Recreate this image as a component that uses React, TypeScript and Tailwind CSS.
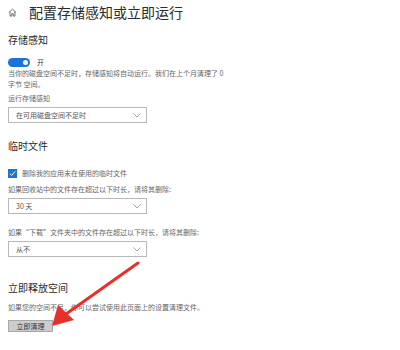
import React from "react";

const font = { fontFamily: '"Noto Sans CJK SC", "Noto Sans", sans-serif' };

function Chevron() {
  return (
    <svg width="8" height="5" viewBox="0 0 8 5" className="mr-[5px]">
      <path d="M0.5 0.5 L4 4 L7.5 0.5" fill="none" stroke="#9a9a9a" strokeWidth="0.9" />
    </svg>
  );
}

function Dropdown({ label }: { label: string }) {
  return (
    <div className="mt-[3px] flex h-[16px] w-[139px] items-center justify-between border border-[#b8b8b8] bg-white pl-[7px] text-[7px] leading-none text-[#555]">
      <span>{label}</span>
      <Chevron />
    </div>
  );
}

export default function App() {
  return (
    <div className="relative h-[350px] w-[400px] overflow-hidden bg-white" style={font}>
      <div className="flex flex-col pl-[8px]">
        <div className="flex h-[24px] items-center">
          <svg width="9" height="9" viewBox="0 0 10 10" className="mr-[12px] mt-[1px]">
            <path d="M1 5 L5 1.2 L9 5 M2.3 4 V9 H4.2 V6.3 H5.8 V9 H7.7 V4" fill="none" stroke="#555" strokeWidth="0.9" strokeLinejoin="round" />
          </svg>
          <span className="text-[14px] leading-[24px] text-[#2b2b2b]">配置存储感知或立即运行</span>
        </div>

        <div className="mt-[9px] text-[10px] leading-[14px] text-[#2b2b2b]">存储感知</div>

        <div className="mt-[11px] flex h-[9px] items-center">
          <div className="flex h-[9px] w-[22px] items-center justify-end rounded-full bg-[#1a73d9] pr-[2px]">
            <div className="h-[5px] w-[5px] rounded-full bg-white" />
          </div>
          <span className="ml-[7px] text-[7px] leading-none text-[#444]">开</span>
        </div>

        <div className="mt-[1px] w-[270px] text-[7px] leading-[11px] text-[#666]">
          当你的磁盘空间不足时，存储感知将自动运行。我们在上个月清理了 0
          <br />
          字节 空间。
        </div>

        <div className="mt-[3px] text-[7px] leading-[11px] text-[#666]">运行存储感知</div>
        <Dropdown label="在可用磁盘空间不足时" />

        <div className="mt-[16px] text-[10px] leading-[14px] text-[#2b2b2b]">临时文件</div>

        <div className="mt-[15px] flex h-[10px] items-center">
          <div className="flex h-[9px] w-[9px] items-center justify-center bg-[#1a73d9]">
            <svg width="7" height="7" viewBox="0 0 8 8">
              <path d="M1 4.2 L3.1 6.2 L7 1.6" fill="none" stroke="white" strokeWidth="1.1" />
            </svg>
          </div>
          <span className="ml-[5px] text-[7px] leading-none text-[#666]">删除我的应用未在使用的临时文件</span>
        </div>

        <div className="mt-[6px] text-[7px] leading-[11px] text-[#666]">如果回收站中的文件存在超过以下时长，请将其删除:</div>
        <Dropdown label="30 天" />

        <div className="mt-[13px] text-[7px] leading-[11px] text-[#666]">如果“下载”文件夹中的文件存在超过以下时长，请将其删除:</div>
        <Dropdown label="从不" />

        <div className="mt-[24px] text-[10px] leading-[14px] text-[#2b2b2b]">立即释放空间</div>
        <div className="mt-[7px] text-[7px] leading-[11px] text-[#666]">如果您的空间不足，你可以尝试使用此页面上的设置清理文件。</div>

        <div className="mt-[7px] flex h-[12px] w-[45px] items-center justify-center border border-[#a8a8a8] bg-[#cccccc] text-[7px] leading-none text-[#333]">
          立即清理
        </div>
      </div>

      <svg className="pointer-events-none absolute left-0 top-0" width="400" height="350" viewBox="0 0 400 350">
        <path d="M138 263 L66 314" stroke="#e8302a" strokeWidth="3" strokeLinecap="round" />
        <path d="M52 326 L58 305 L74 320 Z" fill="#e8302a" />
      </svg>
    </div>
  );
}
